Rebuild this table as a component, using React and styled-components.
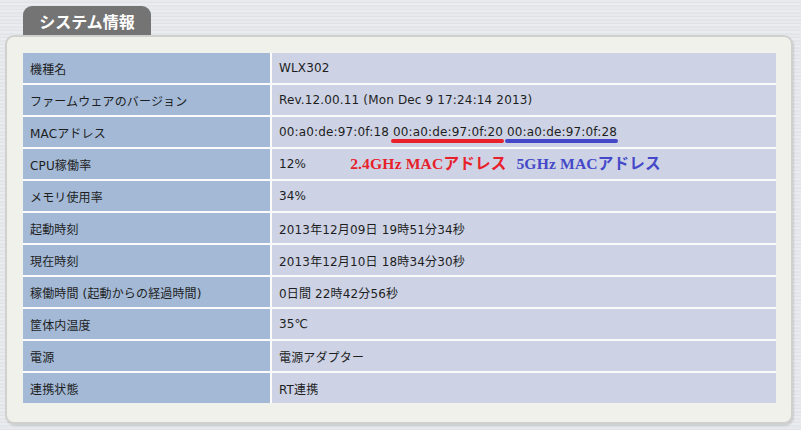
import styled, { createGlobalStyle } from "styled-components";

const GlobalStyle = createGlobalStyle`
  body {
    margin: 0;
    background: repeating-linear-gradient(
      180deg,
      #e7e9ed 0px,
      #e7e9ed 2px,
      #dfe2e7 2px,
      #dfe2e7 3px,
      #eaecef 3px,
      #eaecef 5px,
      #e2e5e9 5px,
      #e2e5e9 7px
    );
    font-family: "DejaVu Sans", "Noto Sans CJK JP", sans-serif;
  }
`;

const Page = styled.div`
  width: 801px;
  height: 430px;
  padding: 6px 8px 0 5px;
  box-sizing: border-box;
  display: flex;
  flex-direction: column;
`;

const Tab = styled.div`
  align-self: flex-start;
  margin-left: 18px;
  width: 128px;
  height: 29px;
  background: #747474;
  border-radius: 9px 9px 0 0;
  color: #fff;
  font-family: "Noto Sans CJK JP", sans-serif;
  font-weight: 700;
  font-size: 16px;
  display: flex;
  align-items: center;
  justify-content: center;
`;

const Panel = styled.div`
  width: 788px;
  height: 389px;
  box-sizing: border-box;
  background: #f0f1eb;
  border: 2px solid #d0d1cf;
  border-radius: 9px;
  box-shadow: 1px 2px 2px rgba(0, 0, 0, 0.12);
  padding: 16px 15px 0 16px;
`;

const Table = styled.div`
  display: grid;
  grid-template-columns: 247px 504px;
  grid-auto-rows: 30px;
  gap: 2px;
  background: #fbfbfb;
  width: fit-content;
`;

const Cell = styled.div`
  background: ${(p) => (p.$head ? "#a3b9d6" : "#cdd3e5")};
  color: #1e1e1e;
  font-size: 12px;
  letter-spacing: 0.15px;
  padding-left: 7px;
  display: flex;
  align-items: center;
  white-space: pre;
`;

const Mark = styled.span`
  position: relative;
  margin-left: 4px;
  &::after {
    content: "";
    position: absolute;
    left: -2px;
    right: -1px;
    bottom: -4px;
    height: 4px;
    border-radius: 2px;
    background: ${(p) => p.$color};
  }
`;

const Note = styled.span`
  margin-left: ${(p) => p.$gap}px;
  margin-top: -4px;
  color: ${(p) => p.$color};
  font-family: "Liberation Serif", "Noto Sans CJK JP", serif;
  font-weight: 700;
  font-size: 15.6px;
`;

const rows = [
  ["機種名", "WLX302"],
  ["ファームウェアのバージョン", "Rev.12.00.11 (Mon Dec 9 17:24:14 2013)"],
  ["MACアドレス", "mac"],
  ["CPU稼働率", "cpu"],
  ["メモリ使用率", "34%"],
  ["起動時刻", "2013年12月09日 19時51分34秒"],
  ["現在時刻", "2013年12月10日 18時34分30秒"],
  ["稼働時間 (起動からの経過時間)", "0日間 22時42分56秒"],
  ["筐体内温度", "35℃"],
  ["電源", "電源アダプター"],
  ["連携状態", "RT連携"],
];

const renderValue = (v) => {
  if (v === "mac")
    return (
      <>
        00:a0:de:97:0f:18
        <Mark $color="#e8202a">00:a0:de:97:0f:20</Mark>
        <Mark $color="#4448c8">00:a0:de:97:0f:28</Mark>
      </>
    );
  if (v === "cpu")
    return (
      <>
        12%
        <Note $color="#e8202a" $gap={44}>
          2.4GHz MACアドレス
        </Note>
        <Note $color="#4448c8" $gap={10}>
          5GHz MACアドレス
        </Note>
      </>
    );
  return v;
};

export default function App() {
  return (
    <>
      <GlobalStyle />
      <Page>
        <Tab>システム情報</Tab>
        <Panel>
          <Table>
            {rows.map(([k, v]) => (
              <>
                <Cell $head key={k}>
                  {k}
                </Cell>
                <Cell key={k + "v"}>{renderValue(v)}</Cell>
              </>
            ))}
          </Table>
        </Panel>
      </Page>
    </>
  );
}
